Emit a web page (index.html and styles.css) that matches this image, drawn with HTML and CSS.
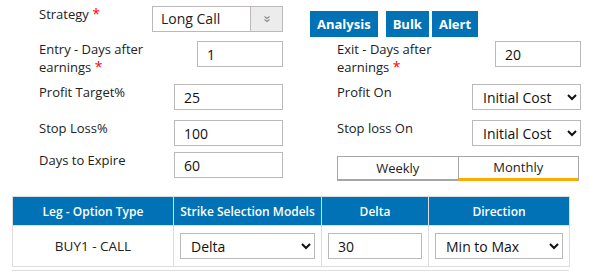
FILE: index.html
```html
<!DOCTYPE html>
<html lang="en">
<head>
  <meta charset="UTF-8" />
  <title>Earnings Strategy</title>
  <link rel="stylesheet" href="styles.css">
</head>
<body>
  <!-- ======= SETTINGS FORM ======= -->
  <section class="settings">
    <div class="field">
      <label>Strategy <span class="req">*</span></label>
      <div class="combo">
        <span class="combo-text">Long Call</span>
        <span class="combo-btn">
          <svg width="10" height="8" viewBox="0 0 10 8"><path d="M2.5 1.5l2.5 2 2.5-2M2.5 4.5l2.5 2 2.5-2" fill="none" stroke="#8a8a8a" stroke-width="1.1"/></svg>
        </span>
      </div>
    </div>
    <div class="actions">
      <button class="btn">Analysis</button>
      <button class="btn btn-bulk">Bulk</button>
      <button class="btn btn-alert">Alert</button>
    </div>

    <div class="field">
      <label class="wrap">Entry - Days after earnings <span class="req">*</span></label>
      <input class="input short" type="text" value="1" />
    </div>
    <div class="field side">
      <label class="wrap">Exit - Days after earnings <span class="req">*</span></label>
      <input class="input short" type="text" value="20" />
    </div>

    <div class="field">
      <label>Profit Target%</label>
      <input class="input" type="text" value="25" />
    </div>
    <div class="field side">
      <label>Profit On</label>
      <select class="select"><option>Initial Cost</option></select>
    </div>

    <div class="field">
      <label>Stop Loss%</label>
      <input class="input" type="text" value="100" />
    </div>
    <div class="field side">
      <label>Stop loss On</label>
      <select class="select"><option>Initial Cost</option></select>
    </div>

    <div class="field">
      <label>Days to Expire</label>
      <input class="input" type="text" value="60" />
    </div>
    <div class="side">
      <div class="toggle">
        <span class="tab">Weekly</span>
        <span class="tab active">Monthly</span>
      </div>
    </div>
  </section>

  <!-- ======= LEGS TABLE ======= -->
  <table class="legs">
    <thead>
      <tr>
        <th class="c-leg">Leg - Option Type</th>
        <th class="c-model">Strike Selection Models</th>
        <th class="c-delta">Delta</th>
        <th class="c-dir">Direction</th>
      </tr>
    </thead>
    <tbody>
      <tr>
        <td>BUY1 - CALL</td>
        <td><select class="select full"><option>Delta</option></select></td>
        <td><input class="input full" type="text" value="30" /></td>
        <td><select class="select full"><option>Min to Max</option></select></td>
      </tr>
    </tbody>
  </table>
  <div class="legs-end"></div>
</body>
</html>
```

FILE: styles.css
```css
:root {
  --clr-blue: #0072b5;
  --clr-line: #ddd;
  --clr-field: #bdb9b9;
  --clr-orange: #ffab00;
}

*,*::before,*::after{box-sizing:border-box;margin:0;padding:0}

body {
  font-family: 'Open Sans', 'Noto Sans', sans-serif;
  font-size: 13px;
  color: #222;
  background: #fff;
  width: 590px;
  height: 271px;
  overflow: hidden;
}

/* ======= FORM GRID ======= */
.settings {
  display: grid;
  grid-template-columns: 244px 271px;
  grid-template-rows: 35px 43px 36px 32px 44px;
  column-gap: 27px;
  padding: 6px 0 0 39px;
}

.field{display:flex;justify-content:space-between;align-items:flex-start}
.side{padding-left:27px}
.field label{font-weight:500;line-height:17px;color:#222}
.field label.wrap{width:125px;line-height:18px;margin-top:-1px}
.req{color:#f00;font-size:14px;display:inline-block;line-height:14px}

.input,.select{height:26px;border:1px solid var(--clr-field);background:#fff;font-family:inherit;font-size:14px;color:#111;width:109px}
.input{padding:0 9px}
.input.short{width:86px}
.select{padding:0 6px}

/* Strategy combo */
.combo{display:flex;width:131px;height:26px;border:1px solid var(--clr-field);font-size:14px}
.combo-text{flex:1;padding:0 8px;line-height:24px}
.combo-btn{width:32px;background:#ececec;border-left:1px solid var(--clr-field);display:flex;align-items:center;justify-content:center}

/* Buttons */
.actions{display:flex;align-items:flex-start;padding-top:5px}
.btn{background:var(--clr-blue);color:#fff;border:0;font-family:inherit;font-weight:700;font-size:13px;height:26px;padding:0 7px}
.btn-bulk{margin-left:8px}
.btn-alert{margin-left:3px}

/* Weekly / Monthly */
.toggle{display:flex;width:242px;margin-top:4px;border:1px solid #a6a6a6;border-bottom:0}
.tab{flex:1;text-align:center;font-weight:500;line-height:22px;border-bottom:2px solid #a6a6a6}
.tab + .tab{border-left:1px solid #a6a6a6}
.tab.active{border-bottom:3px solid var(--clr-orange);line-height:21px}

/* ======= LEGS TABLE ======= */
.legs{margin:0 0 0 12px;width:557px;border-collapse:collapse;table-layout:fixed}
.legs th,.legs td{border:1px solid var(--clr-line);text-align:center}
.legs th{background:var(--clr-blue);color:#fff;font-weight:600;height:29px;font-size:12px;white-space:nowrap}
.legs td{height:41px;padding:0 6px;font-size:13.5px;color:#222}
.c-leg{width:161px}.c-model{width:148px}.c-delta{width:107px}.c-dir{width:141px}
.full{width:100%;text-align:left}
.legs-end{margin:3px 0 0 12px;width:557px;border-top:1px solid var(--clr-line)}
```
